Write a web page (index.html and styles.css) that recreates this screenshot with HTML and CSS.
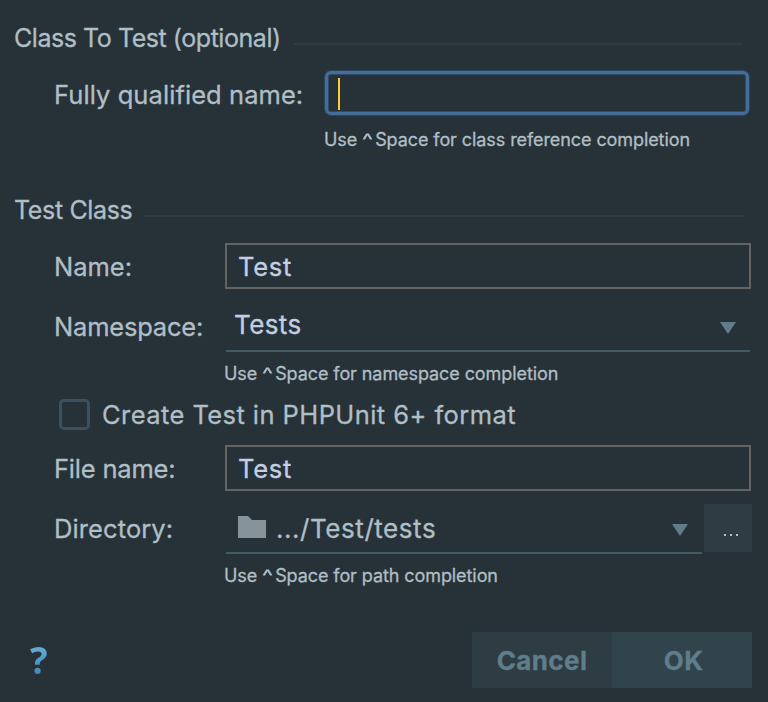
FILE: index.html
```html
<!DOCTYPE html>
<html lang="en">
<head>
<meta charset="utf-8">
<title>Create Test</title>
<link rel="stylesheet" href="styles.css">
</head>
<body>
<main class="dialog">
  <header class="section first"><h2 class="t-class">Class To Test (optional)</h2><span class="rule"></span></header>
  <div class="row row-fqn">
    <label class="t-fqn">Fully qualified name:</label>
    <div class="focus-field"><span class="caret"></span></div>
  </div>
  <p class="hint hint-fqn">Use <span class="ctrl">^</span>Space for class reference completion</p>

  <header class="section second"><h2 class="t-section">Test Class</h2><span class="rule"></span></header>
  <div class="row row-name">
    <label class="t-name">Name:</label>
    <div class="field">Test</div>
  </div>
  <div class="row row-namespace">
    <label class="t-namespace">Namespace:</label>
    <div class="combo"><span class="value">Tests</span>
      <svg class="arrow" width="16" height="12" viewBox="0 0 16 12"><path d="M0 0H16L8 12Z" fill="#607d8b"/></svg>
    </div>
  </div>
  <p class="hint hint-ns">Use <span class="ctrl">^</span>Space for namespace completion</p>
  <div class="row row-check">
    <span class="checkbox"></span><label class="t-create">Create Test in PHPUnit 6+ format</label>
  </div>
  <div class="row row-file">
    <label class="t-file">File name:</label>
    <div class="field">Test</div>
  </div>
  <div class="row row-dir">
    <label class="t-dir">Directory:</label>
    <div class="combo combo-dir">
      <svg class="folder" width="28" height="22" viewBox="0 0 28 22"><path d="M0 0H10L14 4H28V22H0Z" fill="#87939a"/></svg>
      <span class="path">.../Test/tests</span>
      <svg class="arrow" width="16" height="12" viewBox="0 0 16 12"><path d="M0 0H16L8 12Z" fill="#607d8b"/></svg>
    </div>
    <div class="browse"><i></i><i></i><i></i></div>
  </div>
  <p class="hint hint-path">Use <span class="ctrl">^</span>Space for path completion</p>
  <footer class="footer">
    <span class="help">?</span>
    <div class="buttons"><div class="btn cancel">Cancel</div><div class="btn ok">OK</div></div>
  </footer>
</main>
</body>
</html>
```
FILE: styles.css
```css
* { box-sizing: border-box; }
body {
  margin: 0;
  background: #263238;
  color: #b0bec5;
  font: 400 26px/32px Inter, "Liberation Sans", sans-serif;
  -webkit-text-stroke: 0.3px currentColor;
  white-space: nowrap;
}
.dialog { width: 768px; height: 702px; padding-top: 22px; overflow: hidden; }
h2, p { margin: 0; font-weight: 400; }
h2 { font-size: 25px; letter-spacing: -0.45px; }
.t-section { letter-spacing: -0.35px; }
.section { display: flex; height: 32px; padding: 0 25px 0 14px; gap: 13px; }
.rule { flex: 1; height: 2px; margin-top: 21px; background: #2d3b43; }
.second { margin-top: 42px; }
.row { display: flex; align-items: center; padding-left: 54px; }
.row label { width: 171px; flex: none; font-size: 25.5px; }
.row-fqn { height: 48px; margin-top: 15px; }
.row .t-fqn { width: 271px; padding-top: 3px; letter-spacing: 0.07px; }
.row .t-namespace { padding-bottom: 2px; letter-spacing: -0.2px; }
.row .t-create { letter-spacing: 0.43px; }
.row .t-file { padding-top: 1px; letter-spacing: -0.2px; }
.row .t-name { padding-top: 1px; }
.row .t-dir { letter-spacing: 0.1px; }
.focus-field {
  width: 424px; height: 44px; padding: 4px 0 0 10px;
  border: 3px solid #466d97; border-radius: 6px;
  box-shadow: inset 0 0 0 1px #304b69, 0 0 1px 1px #2c4862;
}
.caret { display: block; width: 2px; height: 32px; background: #ffcc33; }
.hint { height: 24px; padding-left: 224px; font-size: 18px; line-height: 23px; letter-spacing: -0.08px; }
.ctrl { display: inline-block; width: 13px; transform: scaleX(1.3); transform-origin: left; }
.hint-fqn { padding-left: 324px; margin-top: 11px; }
.row-name { height: 46px; margin-top: 17px; }
.field { width: 526px; height: 46px; padding: 6px 11px; border: 2px solid #646464; color: #c3cee3; font-size: 25.5px; letter-spacing: 0.7px; }
.row-namespace { height: 49px; margin-top: 14px; }
.combo { display: flex; align-items: center; width: 524px; height: 49px; margin-left: 1px; padding: 0 14px 4px 8px; border-bottom: 2px solid #455a64; color: #c3cee3; letter-spacing: 0.4px; }
.combo .arrow { margin-left: auto; position: relative; top: 3px; }
.hint-ns { margin-top: 10px; }
.row-check { height: 32px; margin-top: 13px; padding-left: 59px; }
.checkbox { width: 31px; height: 31px; margin: -1px 12px 0 0; border: 3px solid #3b525e; border-radius: 5px; }
.row-file { height: 46px; margin-top: 14px; }
.row-dir { height: 50px; margin-top: 13px; }
.combo-dir { width: 476px; height: 50px; padding: 2px 14px 0 12px; color: #b0bec5; letter-spacing: 0.55px; }
.path { margin-left: 10px; }
.combo-dir .arrow { top: 1px; }
.folder { position: relative; top: -2px; }
.browse { display: flex; align-self: flex-start; justify-content: center; gap: 4px; width: 48px; height: 48px; margin-left: 2px; padding: 30px 0 0 6px; background: #2e3c43; }
.browse i { width: 2px; height: 2px; background: #b0bec5; }
.hint-path { margin-top: 10px; }
.footer { display: flex; align-items: flex-start; justify-content: space-between; height: 56px; margin-top: 44px; padding: 0 16px 0 30px; }
.help { font: 700 37px/56px "Open Sans", sans-serif; color: #55a3d2; background: linear-gradient(#62add6 25%, #4389b8 75%); -webkit-background-clip: text; background-clip: text; -webkit-text-fill-color: transparent; -webkit-text-stroke: 0; }
.buttons { display: flex; }
.btn { width: 140px; height: 56px; font-size: 26px; line-height: 57px; font-weight: 700; text-align: center; color: #607d8b; background: #2e3c43; letter-spacing: 0.4px; }
.btn.ok { background: #32444b; padding-left: 3px; }
```
